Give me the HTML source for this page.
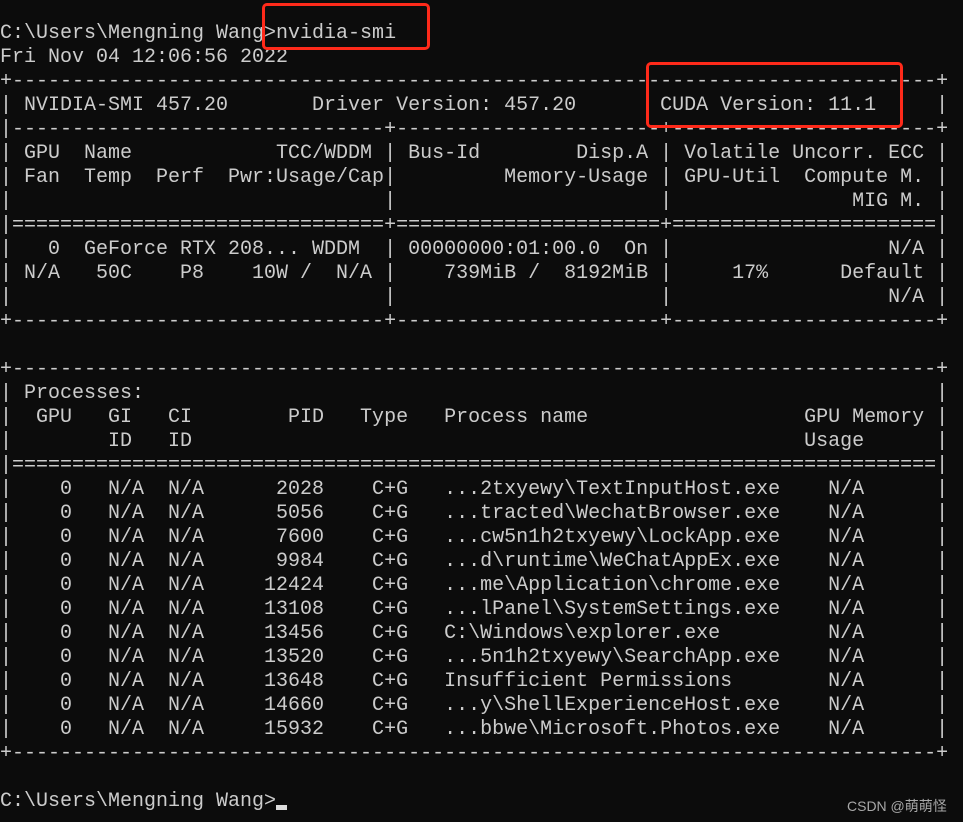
<!DOCTYPE html>
<html><head><meta charset="utf-8"><style>
html,body{margin:0;padding:0;background:#0c0c0c;width:963px;height:822px;overflow:hidden;}
pre{margin:0;position:absolute;left:0;top:22px;font-family:"Liberation Mono",monospace;font-size:20px;line-height:24px;color:#cccccc;}
.box{position:absolute;border:3px solid #ff2a1a;border-radius:5px;box-sizing:border-box;}
.cur{display:inline-block;width:11px;height:5px;background:#ddd;vertical-align:-4px;}
.wm{position:absolute;left:847px;top:796px;font-family:"Liberation Sans","Noto Sans CJK SC",sans-serif;font-size:14px;color:#a8a8a8;}
</style></head><body>
<pre>C:\Users\Mengning Wang&gt;nvidia-smi
Fri Nov 04 12:06:56 2022
+-----------------------------------------------------------------------------+
| NVIDIA-SMI 457.20       Driver Version: 457.20       CUDA Version: 11.1     |
|-------------------------------+----------------------+----------------------+
| GPU  Name            TCC/WDDM | Bus-Id        Disp.A | Volatile Uncorr. ECC |
| Fan  Temp  Perf  Pwr:Usage/Cap|         Memory-Usage | GPU-Util  Compute M. |
|                               |                      |               MIG M. |
|===============================+======================+======================|
|   0  GeForce RTX 208... WDDM  | 00000000:01:00.0  On |                  N/A |
| N/A   50C    P8    10W /  N/A |    739MiB /  8192MiB |     17%      Default |
|                               |                      |                  N/A |
+-------------------------------+----------------------+----------------------+

+-----------------------------------------------------------------------------+
| Processes:                                                                  |
|  GPU   GI   CI        PID   Type   Process name                  GPU Memory |
|        ID   ID                                                   Usage      |
|=============================================================================|
|    0   N/A  N/A      2028    C+G   ...2txyewy\TextInputHost.exe    N/A      |
|    0   N/A  N/A      5056    C+G   ...tracted\WechatBrowser.exe    N/A      |
|    0   N/A  N/A      7600    C+G   ...cw5n1h2txyewy\LockApp.exe    N/A      |
|    0   N/A  N/A      9984    C+G   ...d\runtime\WeChatAppEx.exe    N/A      |
|    0   N/A  N/A     12424    C+G   ...me\Application\chrome.exe    N/A      |
|    0   N/A  N/A     13108    C+G   ...lPanel\SystemSettings.exe    N/A      |
|    0   N/A  N/A     13456    C+G   C:\Windows\explorer.exe         N/A      |
|    0   N/A  N/A     13520    C+G   ...5n1h2txyewy\SearchApp.exe    N/A      |
|    0   N/A  N/A     13648    C+G   Insufficient Permissions        N/A      |
|    0   N/A  N/A     14660    C+G   ...y\ShellExperienceHost.exe    N/A      |
|    0   N/A  N/A     15932    C+G   ...bbwe\Microsoft.Photos.exe    N/A      |
+-----------------------------------------------------------------------------+

C:\Users\Mengning Wang&gt;<span class="cur"></span></pre>
<div class="box" style="left:262px;top:3px;width:168px;height:47px;"></div>
<div class="box" style="left:646px;top:62px;width:257px;height:66px;"></div>
<div class="wm">CSDN @萌萌怪</div>
</body></html>
